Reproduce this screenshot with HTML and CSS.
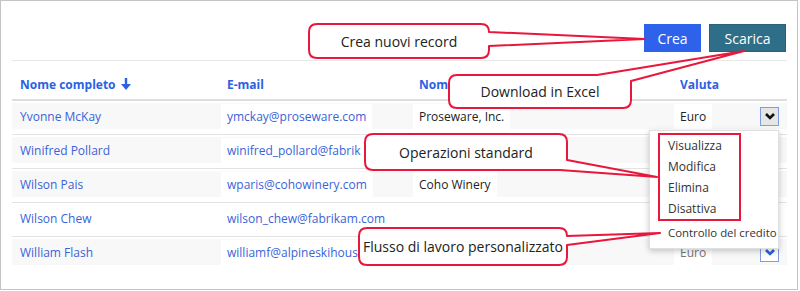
FILE: index.html
```html
<!DOCTYPE html>
<html lang="it">
<head>
  <meta charset="UTF-8" />
  <title>Contatti</title>
  <link rel="stylesheet" href="styles.css">
</head>
<body>
  <div class="frame">
    <div class="toolbar">
      <button class="btn btn-create">Crea</button>
      <button class="btn btn-download">Scarica</button>
    </div>

    <div class="grid">
      <div class="row head">
        <div class="cell">Nome completo
          <svg class="sort" width="10" height="12" viewBox="0 0 10 12"><path d="M3.8 0h2.4v6H10L5 12 0 6h3.8z" fill="#2a62e4"/></svg>
        </div>
        <div class="cell">E-mail</div>
        <div class="cell clip">Nome account</div>
        <div class="cell">Valuta</div>
        <div class="cell"></div>
      </div>

      <div class="row">
        <div class="cells">
          <div class="cell name">Yvonne McKay</div>
          <div class="cell link"><span class="box">ymckay@proseware.com</span></div>
          <div class="cell"><span class="box">Proseware, Inc.</span></div>
          <div class="cell"><span class="box">Euro</span></div>
          <div class="cell"><span class="drop active"><svg width="12" height="12" viewBox="0 0 12 12"><path d="M2 4l4 4 4-4" fill="none" stroke="#111" stroke-width="2.6"/></svg></span></div>
        </div>
      </div>

      <div class="row">
        <div class="cells">
          <div class="cell name">Winifred Pollard</div>
          <div class="cell link"><span class="box">winifred_pollard@fabrik</span></div>
          <div class="cell"></div>
          <div class="cell"></div>
          <div class="cell"><span class="drop"></span></div>
        </div>
      </div>

      <div class="row">
        <div class="cells">
          <div class="cell name">Wilson Pais</div>
          <div class="cell link"><span class="box">wparis@cohowinery.com</span></div>
          <div class="cell"><span class="box">Coho Winery</span></div>
          <div class="cell"></div>
          <div class="cell"><span class="drop"></span></div>
        </div>
      </div>

      <div class="row plain">
        <div class="cells">
          <div class="cell name">Wilson Chew</div>
          <div class="cell link"><span class="box">wilson_chew@fabrikam.com</span></div>
          <div class="cell"></div>
          <div class="cell"></div>
          <div class="cell"><span class="drop"></span></div>
        </div>
      </div>

      <div class="row last">
        <div class="cells">
          <div class="cell name">William Flash</div>
          <div class="cell link"><span class="box">williamf@alpineskihous</span></div>
          <div class="cell"></div>
          <div class="cell muted"><span class="box">Euro</span></div>
          <div class="cell"><span class="drop"><svg width="12" height="12" viewBox="0 0 12 12"><path d="M2 4l4 4 4-4" fill="none" stroke="#2a62e4" stroke-width="2.6"/></svg></span></div>
        </div>
      </div>
    </div>

    <div class="menu">
      <div class="standard">
        <div class="item">Visualizza</div>
        <div class="item">Modifica</div>
        <div class="item">Elimina</div>
        <div class="item">Disattiva</div>
      </div>
      <div class="item custom">Controllo del credito</div>
    </div>

    <svg class="callouts" width="800" height="291" viewBox="0 0 800 291">
      <path d="M317 24H481Q489 24 489 32L645 39L489 46V50Q489 58 481 58H317Q309 58 309 50V32Q309 24 317 24Z"/>
      <path d="M457 75H597L744 51L631 81V100Q631 108 623 108H457Q449 108 449 100V83Q449 75 457 75Z"/>
      <path d="M373 134H559Q567 134 567 142V160L657 177L560 170H373Q365 170 365 162V142Q365 134 373 134Z"/>
      <path d="M367 228H559Q567 228 567 236L660 233L567 245V257Q567 265 559 265H367Q359 265 359 257V236Q359 228 367 228Z"/>
    </svg>

    <div class="label label-create">Crea nuovi record</div>
    <div class="label label-download">Download in Excel</div>
    <div class="label label-standard">Operazioni standard</div>
    <div class="label label-custom">Flusso di lavoro personalizzato</div>
  </div>
</body>
</html>
```

FILE: styles.css
```css
* {
  box-sizing: border-box;
}

body {
  margin: 0;
  background: #fff;
  font-family: 'Open Sans', 'Noto Sans', sans-serif;
  font-size: 12px;
  color: #222;
}

.frame {
  position: relative;
  width: 798px;
  height: 290px;
  border: 1px solid #c4c4c4;
  padding: 0 10px 0 11px;
}

.toolbar {
  display: flex;
  justify-content: flex-end;
  gap: 8px;
  padding: 23px 1px 8px 0;
  border-bottom: 1px solid #e8e8e8;
}

.btn {
  height: 28px;
  border: none;
  color: #fff;
  font-family: inherit;
  font-size: 14px;
  padding: 0;
}

.btn-create {
  width: 57px;
  background: #2f62ea;
}

.btn-download {
  width: 77px;
  background: #2f6e88;
  border: 1px solid #2a6179;
}

.row {
  border-bottom: 1px solid #e3e3e3;
  padding: 2px 0 5px;
}

.cells,
.head {
  display: grid;
  grid-template-columns: 207px 192px 261px 80px 35px;
  align-items: center;
}

.cells {
  height: 26px;
  background: #f8f8f8;
}

.plain .cells {
  background: #fff;
}

.last {
  border-bottom: none;
}

.row.head {
  height: 40px;
  padding: 8px 0 0;
  border-bottom: 2px solid #dedede;
  font-weight: bold;
  color: #2a62e4;
}

.cell {
  padding-left: 8px;
  white-space: nowrap;
}

.head .cell {
  display: flex;
  align-items: center;
  gap: 5px;
}

.head .clip {
  max-width: 38px;
  overflow: hidden;
}

.name,
.link {
  color: #3a63d8;
}

.box {
  background: #fff;
  padding: 4px 6px;
  margin-left: -6px;
}

.muted {
  color: #777;
}

.drop {
  display: flex;
  align-items: center;
  justify-content: center;
  width: 19px;
  height: 19px;
  border: 1px solid #7f9de6;
  background: #fff;
}

.drop.active {
  background: #e6e6e6;
}

.menu {
  position: absolute;
  left: 648px;
  top: 129px;
  width: 130px;
  height: 119px;
  background: #fff;
  border: 1px solid #e0e0e0;
  box-shadow: 0 2px 6px rgba(0, 0, 0, 0.22);
  padding-top: 2px;
  z-index: 2;
}

.standard {
  margin-left: 8px;
  width: 83px;
  border: 2px solid #e8173b;
}

.item {
  height: 21px;
  line-height: 21px;
  padding-left: 8px;
  color: #333;
  white-space: nowrap;
}

.custom {
  height: 23px;
  line-height: 23px;
  padding-left: 18px;
  font-size: 11.4px;
}

.callouts {
  position: absolute;
  left: -1px;
  top: -1px;
  z-index: 3;
}

.callouts path {
  fill: #fff;
  stroke: #e8173b;
  stroke-width: 2;
  stroke-linejoin: round;
}

.label {
  position: absolute;
  display: flex;
  align-items: center;
  justify-content: center;
  font-size: 14px;
  color: #222;
  white-space: nowrap;
  z-index: 4;
}

.label-create {
  left: 308px;
  top: 23px;
  width: 180px;
  height: 34px;
}

.label-download {
  left: 448px;
  top: 74px;
  width: 182px;
  height: 33px;
}

.label-standard {
  left: 364px;
  top: 133px;
  width: 202px;
  height: 36px;
}

.label-custom {
  left: 358px;
  top: 227px;
  width: 208px;
  height: 37px;
}
```
